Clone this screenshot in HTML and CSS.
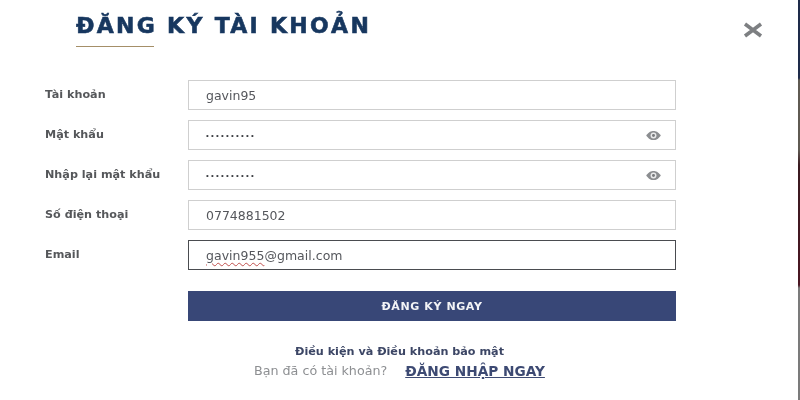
FILE: index.html
```html
<!DOCTYPE html>
<html lang="vi">
<head>
<meta charset="utf-8">
<title>Đăng ký tài khoản</title>
<link rel="stylesheet" href="styles.css">
</head>
<body>
<main class="modal">
  <header class="head">
    <div>
      <h1 class="title">ĐĂNG KÝ TÀI KHOẢN</h1>
      <div class="rule"></div>
    </div>
    <button class="close" aria-label="Đóng">
      <svg viewBox="0 0 20 16" width="20" height="16"><path d="M2 2 18 14M18 2 2 14" stroke="#7d7f82" stroke-width="3.6" fill="none"/></svg>
    </button>
  </header>
  <form class="form">
    <div class="row"><span class="label">Tài khoản</span><div class="field">gavin95</div></div>
    <div class="row"><span class="label">Mật khẩu</span><div class="field"><span class="dots">••••••••••</span>
      <svg class="eye" viewBox="0 0 18 12" width="17" height="11"><path d="M1 6C4 1.800 6.500 1 9 1s5 .8 8 5c-3 4.200-5.500 5-8 5s-5-.8-8-5Z" fill="#8b8d90"/><circle cx="9" cy="6" r="3.200" fill="#e9e9ea"/><circle cx="9" cy="6" r="1.600" fill="#77797c"/></svg></div></div>
    <div class="row"><span class="label">Nhập lại mật khẩu</span><div class="field"><span class="dots">••••••••••</span>
      <svg class="eye" viewBox="0 0 18 12" width="17" height="11"><path d="M1 6C4 1.800 6.500 1 9 1s5 .8 8 5c-3 4.200-5.500 5-8 5s-5-.8-8-5Z" fill="#8b8d90"/><circle cx="9" cy="6" r="3.200" fill="#e9e9ea"/><circle cx="9" cy="6" r="1.600" fill="#77797c"/></svg></div></div>
    <div class="row"><span class="label">Số điện thoại</span><div class="field">0774881502</div></div>
    <div class="row"><span class="label">Email</span><div class="field focus"><span class="typo">gavin955</span>@gmail.com</div></div>
    <div class="submit"><div class="button">ĐĂNG KÝ NGAY</div></div>
  </form>
  <p class="terms">Điều kiện và Điều khoản bảo mật</p>
  <p class="login"><span class="ask">Bạn đã có tài khoản?</span><a class="link">ĐĂNG NHẬP NGAY</a></p>
</main>
<div class="backdrop"></div>
</body>
</html>
```
FILE: styles.css
```css
* { box-sizing: border-box; }
html, body { margin: 0; height: 400px; overflow: hidden; }
body { display: flex; width: 800px; background: #fff; font-family: "DejaVu Sans", sans-serif; }
.modal { width: 798px; height: 400px; background: #fff; padding: 0 0 0 45px; filter: blur(.35px); }
.head { display: flex; justify-content: space-between; height: 80px; padding: 12px 35px 0 31px; }
.title { margin: 0; font-size: 22px; line-height: 28px; font-weight: 700; letter-spacing: 2.300px; -webkit-text-stroke: .6px #17375f; color: #17375f; white-space: nowrap; }
.rule { width: 78px; height: 1px; margin-top: 6px; background: #a58f68; }
.close { border: 0; padding: 0; background: none; height: 16px; margin-top: 10px; display: block; }
.form { display: flex; flex-direction: column; gap: 10px; }
.row { display: flex; height: 30px; }
.label { width: 143px; font-size: 11.200px; line-height: 29px; font-weight: 700; color: #55575a; white-space: nowrap; }
.field { width: 488px; height: 30px; display: flex; align-items: center; justify-content: space-between; padding: 0 13px 0 17px; border: 1px solid #cfcfcf; font-size: 12.500px; color: #55575c; background: #fff; }
.focus { display: block; line-height: 29px; letter-spacing: .02px; border-color: #4a4c50; }
.typo { text-decoration: underline wavy #c0504d 1px; text-underline-offset: 2px; }
.dots { font-family: "Liberation Sans", sans-serif; font-size: 8px; letter-spacing: 2.200px; color: #3c3e42; }
.eye { display: block; }
.submit { margin: 11px 0 0 143px; }
.button { width: 488px; height: 30px; display: flex; align-items: center; justify-content: center; background: #384777; color: #f2f3f6; font-size: 11px; letter-spacing: .6px; font-weight: 700; }
.terms { margin: 24px 0 0; width: 709px; text-align: center; font-size: 11.200px; line-height: 14px; font-weight: 700; color: #3c4665; }
.login { margin: 3px 0 0; padding-left: 209px; display: flex; align-items: center; gap: 18px; line-height: 18px; }
.ask { font-size: 12.700px; color: #8d8f92; }
.link { font-size: 13.700px; font-weight: 700; color: #3d4a73; text-decoration: underline; }
.backdrop { width: 2px; height: 400px; background: linear-gradient(#1e2b4a 0, #1e2b4a 78px, #5f5a52 80px, #5f5a52 150px, #3a1a20 165px, #4a1622 285px, #7b7b7b 288px, #7b7b7b 100%); }
```
